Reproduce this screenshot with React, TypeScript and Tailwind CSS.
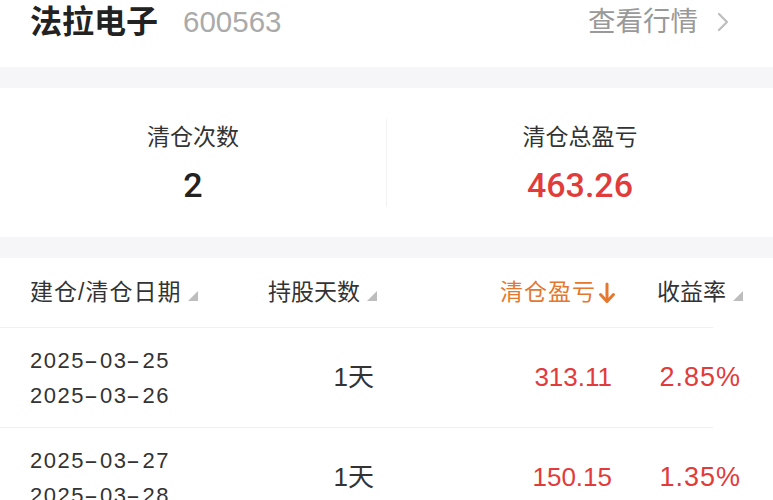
const FONT = '"Liberation Sans", "Noto Sans CJK SC", sans-serif';

const rows = [
  { open: '2025-03-25', close: '2025-03-26', days: '1天', profit: '313.11', rate: '2.85%' },
  { open: '2025-03-27', close: '2025-03-28', days: '1天', profit: '150.15', rate: '1.35%' },
];

function SortMark() {
  return (
    <svg width="10" height="10" viewBox="0 0 10 10" className="ml-[7px] mt-[6px] shrink-0">
      <polygon points="10,0 10,10 0,10" fill="#bdbdbd" />
    </svg>
  );
}

function DownArrow() {
  return (
    <svg width="18" height="22" viewBox="0 0 18 22" className="ml-[2px] shrink-0">
      <path d="M9 2 V19" stroke="#e5772e" strokeWidth="3" strokeLinecap="round" fill="none" />
      <path d="M2.5 12.5 L9 19.5 L15.5 12.5" stroke="#e5772e" strokeWidth="3" strokeLinecap="round" strokeLinejoin="round" fill="none" />
    </svg>
  );
}

// the screenshot's font has a long dash between date parts
function DateText({ value }: { value: string }) {
  const parts = value.split('-');
  return (
    <div>
      {parts.map((p, i) => (
        <span key={i}>
          {i > 0 && <span className="inline-block w-[15px] text-center scale-x-[1.9]">-</span>}
          {p}
        </span>
      ))}
    </div>
  );
}

export default function App() {
  return (
    <div className="w-[773px] h-[500px] overflow-hidden bg-white" style={{ fontFamily: FONT }}>
      {/* Header */}
      <div className="h-[67px] px-[30px] flex items-start">
        <div className="h-[44px] flex items-center w-full">
          <span className="text-[32px] font-bold text-[#222]">法拉电子</span>
          <span className="ml-[25px] text-[29.5px] text-[#aaaaaa]">600563</span>
          <span className="ml-auto text-[27.5px] text-[#999]">查看行情</span>
          <svg width="14" height="22" viewBox="0 0 14 22" className="ml-[18px] mr-[13px]">
            <path d="M3 3 L11 11 L3 19" stroke="#bdbdbd" strokeWidth="2.2" fill="none" strokeLinecap="round" strokeLinejoin="round" />
          </svg>
        </div>
      </div>

      <div className="h-[21px] bg-[#f6f6f9]" />

      {/* Summary */}
      <div className="h-[149px] flex items-center">
        <div className="flex-1 flex flex-col items-center">
          <span className="text-[23px] text-[#333] leading-[30px]">清仓次数</span>
          <span className="mt-[14px] text-[34px] text-[#222] leading-[38px]" style={{ fontFamily: 'Roboto, sans-serif', fontWeight: 500 }}>2</span>
        </div>
        <div className="w-px h-[88px] bg-[#f2f2f2]" />
        <div className="flex-1 flex flex-col items-center">
          <span className="text-[23px] text-[#333] leading-[30px]">清仓总盈亏</span>
          <span className="mt-[14px] text-[34px] text-[#e23b3b] leading-[38px]" style={{ fontFamily: 'Roboto, sans-serif', fontWeight: 500 }}>463.26</span>
        </div>
      </div>

      <div className="h-[21px] bg-[#f6f6f9]" />

      {/* Table header */}
      <div className="h-[69px] flex items-center text-[23px] text-[#333]">
        <div className="w-[250px] pl-[30px] flex items-center">
          <span className="tracking-[1px]">建仓/清仓日期</span>
          <SortMark />
        </div>
        <div className="w-[128px] flex items-center justify-end pr-[1px]">
          <span>持股天数</span>
          <SortMark />
        </div>
        <div className="w-[238px] flex items-center justify-end text-[#e5772e]">
          <span className="tracking-[1px]">清仓盈亏</span>
          <DownArrow />
        </div>
        <div className="w-[127px] flex items-center justify-end">
          <span>收益率</span>
          <SortMark />
        </div>
      </div>

      {rows.map((r) => (
        <div key={r.open}>
          <div className="h-px bg-[#f0f0f0] mr-[60px]" />
          <div className="h-[99px] flex items-center">
            <div className="w-[250px] pl-[30px] text-[22px] leading-[35px] text-[#333] tracking-[1.5px]">
              <DateText value={r.open} />
              <DateText value={r.close} />
            </div>
            <div className="w-[124px] text-right text-[26px] text-[#333]">{r.days}</div>
            <div className="w-[238px] text-right text-[26px] text-[#e23b3b]">{r.profit}</div>
            <div className="w-[129px] text-right text-[27px] text-[#e23b3b] tracking-[1px]">{r.rate}</div>
          </div>
        </div>
      ))}
    </div>
  );
}
